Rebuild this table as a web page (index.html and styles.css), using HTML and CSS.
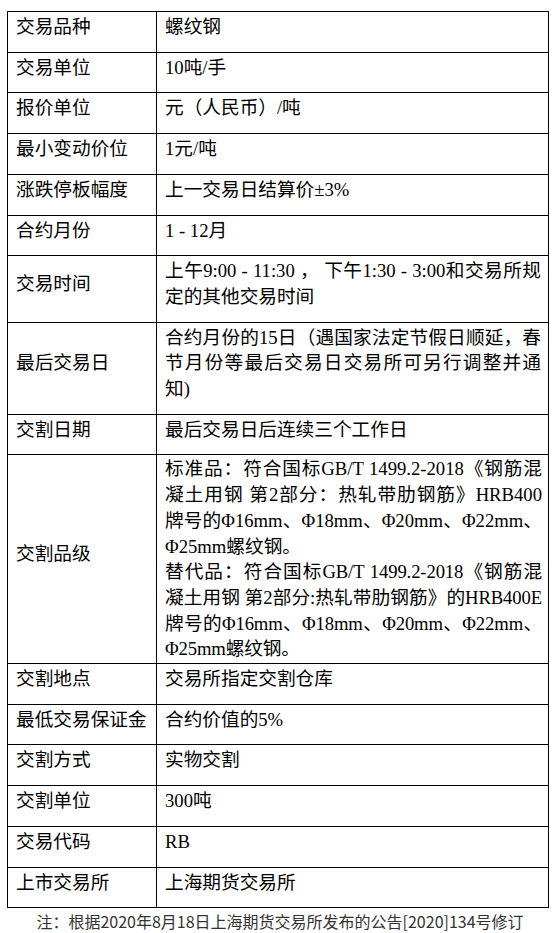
FILE: index.html
```html
<!DOCTYPE html>
<html lang="zh-CN">
<head>
<meta charset="utf-8">
<title>螺纹钢期货合约</title>
<link rel="stylesheet" href="styles.css">
</head>
<body>
<table class="spec">
  <colgroup><col class="c-label"><col class="c-value"></colgroup>
  <tbody>
    <tr><td class="label">交易品种</td><td class="value">螺纹钢</td></tr>
    <tr><td class="label">交易单位</td><td class="value">10吨/手</td></tr>
    <tr><td class="label">报价单位</td><td class="value">元（人民币）/吨</td></tr>
    <tr><td class="label">最小变动价位</td><td class="value">1元/吨</td></tr>
    <tr><td class="label">涨跌停板幅度</td><td class="value">上一交易日结算价±3%</td></tr>
    <tr><td class="label">合约月份</td><td class="value">1 - 12月</td></tr>
    <tr><td class="label">交易时间</td><td class="value">上午9:00 - 11:30 ， 下午1:30 - 3:00和交易所规定的其他交易时间</td></tr>
    <tr><td class="label">最后交易日</td><td class="value">合约月份的15日（遇国家法定节假日顺延，春节月份等最后交易日交易所可另行调整并通知)</td></tr>
    <tr><td class="label">交割日期</td><td class="value">最后交易日后连续三个工作日</td></tr>
    <tr><td class="label">交割品级</td><td class="value tight"><span class="para">标准品：符合国标GB/T 1499.2-2018《钢筋混凝土用钢 第2部分：热轧带肋钢筋》HRB400牌号的Φ16mm、Φ18mm、Φ20mm、Φ22mm、Φ25mm螺纹钢。</span><br><span class="para alt">替代品：符合国标GB/T 1499.2-2018《钢筋混凝土用钢 第2部分:热轧带肋钢筋》的HRB400E牌号的Φ16mm、Φ18mm、Φ20mm、Φ22mm、Φ25mm螺纹钢。</span></td></tr>
    <tr><td class="label">交割地点</td><td class="value">交易所指定交割仓库</td></tr>
    <tr><td class="label">最低交易保证金</td><td class="value">合约价值的5%</td></tr>
    <tr><td class="label">交割方式</td><td class="value">实物交割</td></tr>
    <tr><td class="label">交割单位</td><td class="value">300吨</td></tr>
    <tr><td class="label">交易代码</td><td class="value">RB</td></tr>
    <tr><td class="label">上市交易所</td><td class="value">上海期货交易所</td></tr>
  </tbody>
</table>
<p class="note">注：根据2020年8月18日上海期货交易所发布的公告[2020]134号修订</p>
</body>
</html>
```

FILE: styles.css
```css
html, body {
  margin: 0;
  padding: 0;
  background: #ffffff;
}

body {
  font-family: "Liberation Serif", "Noto Sans CJK SC", serif;
  color: #000000;
}

.spec {
  margin: 11px 0 0 7px;
  width: 542px;
  border-collapse: collapse;
  table-layout: fixed;
  font-size: 18.67px;
  line-height: 25.7px;
}

.c-label {
  width: 149px;
}

.spec td {
  border: 1px solid #000000;
  padding: 2px 7px 12px 8px;
  vertical-align: middle;
  text-align: justify;
}

.spec td.tight {
  padding-top: 1px;
  padding-bottom: 1px;
  padding-right: 6px;
}

.para.alt {
  letter-spacing: -0.12px;
}

.note {
  margin: 1px 0 0 0;
  font-family: "Noto Sans CJK SC", "Noto Sans", sans-serif;
  font-size: 16px;
  line-height: 24px;
  color: #333333;
  text-align: center;
}
```
